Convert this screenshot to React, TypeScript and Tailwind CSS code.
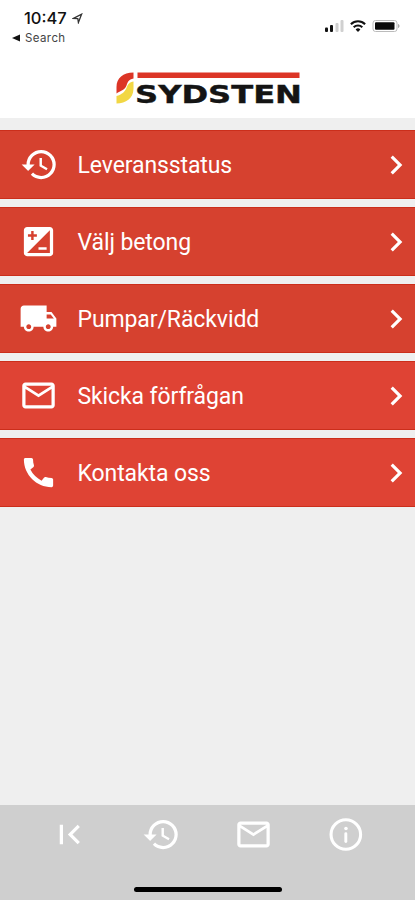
import React from 'react';
import { IconType } from 'react-icons';
import {
  MdCall,
  MdChevronRight,
  MdFirstPage,
  MdHistory,
  MdIso,
  MdLocalShipping,
  MdMailOutline,
} from 'react-icons/md';

interface MenuItem {
  label: string;
  icon: IconType;
  color: string;
}

const menuItems: MenuItem[] = [
  { label: 'Leveransstatus', icon: MdHistory, color: 'bg-[#d6412f]' },
  { label: 'Välj betong', icon: MdIso, color: 'bg-[#d6412f]' },
  { label: 'Pumpar/Räckvidd', icon: MdLocalShipping, color: 'bg-[#d6412f]' },
  { label: 'Skicka förfrågan', icon: MdMailOutline, color: 'bg-[#df4334]' },
  { label: 'Kontakta oss', icon: MdCall, color: 'bg-[#df4334]' },
];

const InfoIcon = () => (
  <svg width="39" height="39" viewBox="0 0 24 24" fill="none" stroke="currentColor">
    <circle cx="12.2" cy="12" r="9.1" strokeWidth="1.9" />
    <circle cx="12.3" cy="8.3" r="1.1" fill="currentColor" stroke="none" />
    <path d="M12.2 11.5v4.8" strokeWidth="1.8" strokeLinecap="round" />
  </svg>
);

const StatusBar = () => (
  <div className="flex h-[60px] justify-between pl-3 pr-[14px] pt-[9px] font-[Inter,sans-serif] text-[#111]">
    <div>
      <div className="flex items-center gap-[5px] pl-3">
        <span className="text-[16.5px] font-medium leading-[19px]">10:47</span>
        <svg width="11" height="11" viewBox="0 0 11 11" fill="none" stroke="#333" strokeWidth="1.3">
          <path d="M1.5 5.4 9.6 1.2 6.4 9.500 5.800 5.600z" />
        </svg>
      </div>
      <div className="mt-[3px] flex items-center gap-[5px]">
        <svg width="8" height="8" viewBox="0 0 8 8" fill="#111">
          <path d="M0 4 8 .5v7z" />
        </svg>
        <span className="text-[11.5px] leading-[14px] tracking-[0.4px] text-[#444]">Search</span>
      </div>
    </div>
    <div className="flex h-[24px] items-end gap-[6px]">
      <svg width="20" height="14" viewBox="0 0 20 14">
        <rect x="1" y="8.5" width="3" height="4.5" rx="1" fill="#111" />
        <rect x="6" y="6" width="3" height="7" rx="1" fill="#111" />
        <rect x="11.5" y="4" width="3" height="9" rx="1" fill="#d0d0d0" />
        <rect x="16.5" y="1" width="3" height="12" rx="1" fill="#d0d0d0" />
      </svg>
      <svg width="16" height="14" viewBox="0 0 16 14" fill="none" stroke="#111" strokeWidth="2.1">
        <path d="M.9 5.2a10.2 10.2 0 0 1 14.2 0" />
        <path d="M3.7 8.3a6.2 6.2 0 0 1 8.6 0" />
        <path d="M8 13 5.6 10.5a3.4 3.4 0 0 1 4.8 0z" fill="#111" stroke="none" />
      </svg>
      <svg width="29" height="14" viewBox="0 0 29 14">
        <rect x="1" y="1.5" width="24" height="11" rx="2.5" fill="#fff" stroke="#bbb" />
        <rect x="3" y="3.2" width="19.5" height="7.6" rx="1" fill="#0a0a0a" />
        <path d="M26 5v4c1-.3 1.5-1 1.5-2S27 5.3 26 5z" fill="#aaa" />
      </svg>
    </div>
  </div>
);

const Logo = () => (
  <svg className="mx-auto" width="186" height="36" viewBox="0 0 186 36">
    <path d="M18.5.5V6.5C13.500 7.500 12.800 10 11.500 13.500 9.500 18.500 5.500 18.500 1.500 21.500V15C1.500 6 8 .5 18.500 .5z" fill="#dc3526" />
    <path d="M18.5 9.5V17C18 27 11 31 1.5 31.5V24C7 22.5 9.5 20 11.5 16 13 12 14.5 10 18.5 9.5z" fill="#f2d744" />
    <rect x="22.5" y="0.5" width="162" height="5.5" fill="#dc3526" />
    <text
      x="20"
      y="31"
      textLength="167"
      lengthAdjust="spacingAndGlyphs"
      className="font-['DejaVu_Sans',sans-serif] text-[24.5px] font-bold"
      fill="#141414"
      stroke="#141414"
      strokeWidth="0.4"
    >
      SYDSTEN
    </text>
  </svg>
);

const App: React.FC = () => {
  return (
    <div className="flex h-[900px] w-[415px] flex-col overflow-hidden bg-[#efefef] font-[Roboto,sans-serif]">
      <header className="h-[118px] bg-white">
        <StatusBar />
        <div className="pt-3">
          <Logo />
        </div>
      </header>

      <nav className="mt-3 flex flex-col gap-2">
        {menuItems.map(({ label, icon: Icon, color }) => (
          <button
            key={label}
            className={`flex h-[69px] w-full items-center border-y border-[#cb2e1b] pl-[19px] text-left text-white ${color}`}
          >
            <span className={label === 'Leveransstatus' ? 'ml-px -mr-px' : ''}>
              <Icon size={39} />
            </span>
            <span className="ml-[19.5px] flex-1 pt-[2px] text-[23px] font-normal leading-7 tracking-[-0.1px]">{label}</span>
            <MdChevronRight size={38} />
          </button>
        ))}
      </nav>

      {/* Bottom tab bar with the home indicator */}
      <footer className="mt-auto flex h-[95px] flex-col items-center bg-[#cfcfcf]">
        <div className="grid w-full grid-cols-4 justify-items-center px-[23px] pt-[9.5px] text-white">
          <MdFirstPage size={39} />
          <MdHistory size={39} />
          <MdMailOutline size={39} />
          <InfoIcon />
        </div>
        <div className="mb-[8px] mt-auto h-[5px] w-[148px] rounded-full bg-black" />
      </footer>
    </div>
  );
};

export default App;
